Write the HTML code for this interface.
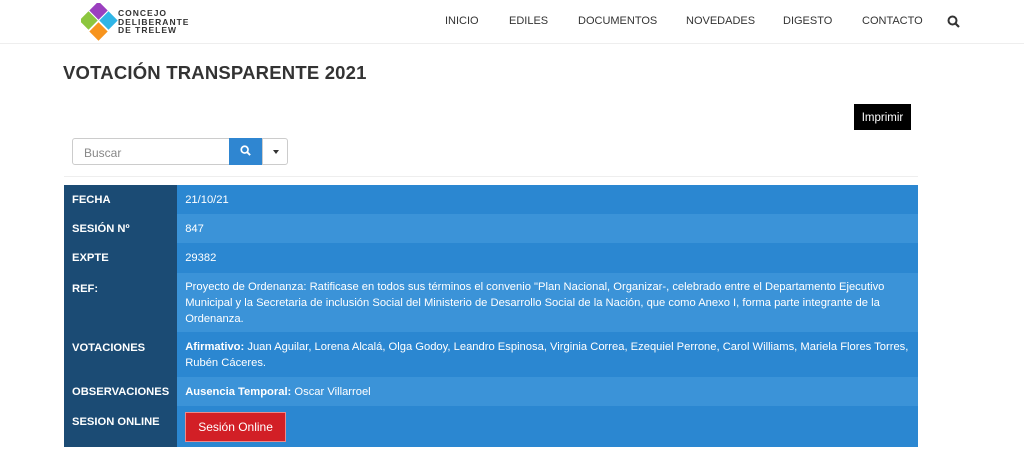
<!DOCTYPE html>
<html><head><meta charset="utf-8">
<style>
*{box-sizing:border-box;margin:0;padding:0}
body{width:1024px;height:456px;background:#fff;font-family:"Liberation Sans",Arial,sans-serif;position:relative;overflow:hidden}
.hdr{position:absolute;left:0;top:0;width:1024px;height:44px;border-bottom:1px solid #eee}
.logo{position:absolute;left:81px;top:3px}
.ltxt{position:absolute;left:118px;top:9px;font-size:8.5px;font-weight:bold;line-height:8.5px;letter-spacing:1px;color:#333}
.nav{position:absolute;top:15px;font-size:11px;color:#333;letter-spacing:0}
h1{position:absolute;left:63px;top:62px;font-size:18.5px;font-weight:bold;color:#333;letter-spacing:.2px}
.imp{position:absolute;left:854px;top:104px;width:57px;height:26px;background:#000;color:#fff;font-size:11.5px;line-height:28px;text-align:center}
.search{position:absolute;left:72px;top:138px;width:216px;height:27px;border:1px solid #ccc;border-radius:3px}
.search span{position:absolute;left:11px;top:7px;font-size:12px;color:#888}
.sb{position:absolute;left:156px;top:-1px;width:33px;height:27px;background:#2f86d1}
.dd{position:absolute;left:189px;top:0;width:26px;height:25px;border-left:1px solid #ccc}
.line{position:absolute;left:64px;top:176px;width:854px;height:1px;background:#eee}
table{position:absolute;left:64px;top:185px;width:854px;border-collapse:collapse;font-size:11.2px;color:#fff}
td{padding:0 8px;vertical-align:middle;line-height:16px}
td.l{width:113px;background:#1b4b74;font-weight:bold;padding-left:8px}
td.t{vertical-align:top;padding-top:8px}
tr:nth-child(odd) td.v{background:#2b87d1}
tr:nth-child(even) td.v{background:#3b93d8}
.btn{display:inline-block;background:#d21f26;border:1px solid #e88;color:#fff;font-size:12px;padding:6px 12px;margin:4px 0}
</style></head><body>
<div class="hdr">
<svg class="logo" width="38" height="38" viewBox="0 0 38 38">
<rect x="11" y="1" width="13" height="13" transform="rotate(45 17.5 7.5)" fill="#9b3fbf"/>
<rect x="21" y="11" width="13" height="13" transform="rotate(45 27.5 17.5)" fill="#2fb5e6"/>
<rect x="1" y="11" width="13" height="13" transform="rotate(45 7.5 17.5)" fill="#8cc63f"/>
<rect x="11" y="22" width="13" height="13" transform="rotate(45 17.5 28.5)" fill="#f7941d"/>
</svg>
<div class="ltxt">CONCEJO<br>DELIBERANTE<br>DE TRELEW</div>
<div class="nav" style="left:445px">INICIO</div>
<div class="nav" style="left:509px">EDILES</div>
<div class="nav" style="left:578px">DOCUMENTOS</div>
<div class="nav" style="left:686px">NOVEDADES</div>
<div class="nav" style="left:783px">DIGESTO</div>
<div class="nav" style="left:862px">CONTACTO</div>
<svg style="position:absolute;left:947px;top:15px" width="13" height="13" viewBox="0 0 13 13"><circle cx="5.5" cy="5.5" r="4" fill="none" stroke="#333" stroke-width="2"/><path d="M8.5 8.5L12 12" stroke="#333" stroke-width="2.2"/></svg>
</div>
<h1>VOTACIÓN TRANSPARENTE 2021</h1>
<div class="imp">Imprimir</div>
<div class="search"><span>Buscar</span>
<div class="sb"><svg style="position:absolute;left:11px;top:7px" width="11" height="11" viewBox="0 0 13 13"><circle cx="5.5" cy="5.5" r="4" fill="none" stroke="#fff" stroke-width="2"/><path d="M8.5 8.5L12 12" stroke="#fff" stroke-width="2.2"/></svg></div>
<div class="dd"><div style="position:absolute;left:10px;top:11px;border-left:3.5px solid transparent;border-right:3.5px solid transparent;border-top:4px solid #333"></div></div>
</div>
<div class="line"></div>
<table>
<tr style="height:29px"><td class="l">FECHA</td><td class="v">21/10/21</td></tr>
<tr style="height:29px"><td class="l">SESIÓN Nº</td><td class="v">847</td></tr>
<tr style="height:30px"><td class="l">EXPTE</td><td class="v">29382</td></tr>
<tr style="height:59px"><td class="l t">REF:</td><td class="v">Proyecto de Ordenanza: Ratificase en todos sus términos el convenio "Plan Nacional, Organizar-, celebrado entre el Departamento Ejecutivo Municipal y la Secretaria de inclusión Social del Ministerio de Desarrollo Social de la Nación, que como Anexo I, forma parte integrante de la Ordenanza.</td></tr>
<tr style="height:45px"><td class="l t">VOTACIONES</td><td class="v"><b>Afirmativo:</b> Juan Aguilar, Lorena Alcalá, Olga Godoy, Leandro Espinosa, Virginia Correa, Ezequiel Perrone, Carol Williams, Mariela Flores Torres, Rubén Cáceres.</td></tr>
<tr style="height:29px"><td class="l">OBSERVACIONES</td><td class="v"><b>Ausencia Temporal:</b> Oscar Villarroel</td></tr>
<tr style="height:41px"><td class="l t">SESION ONLINE</td><td class="v"><span class="btn">Sesión Online</span></td></tr>
</table>
</body></html>
